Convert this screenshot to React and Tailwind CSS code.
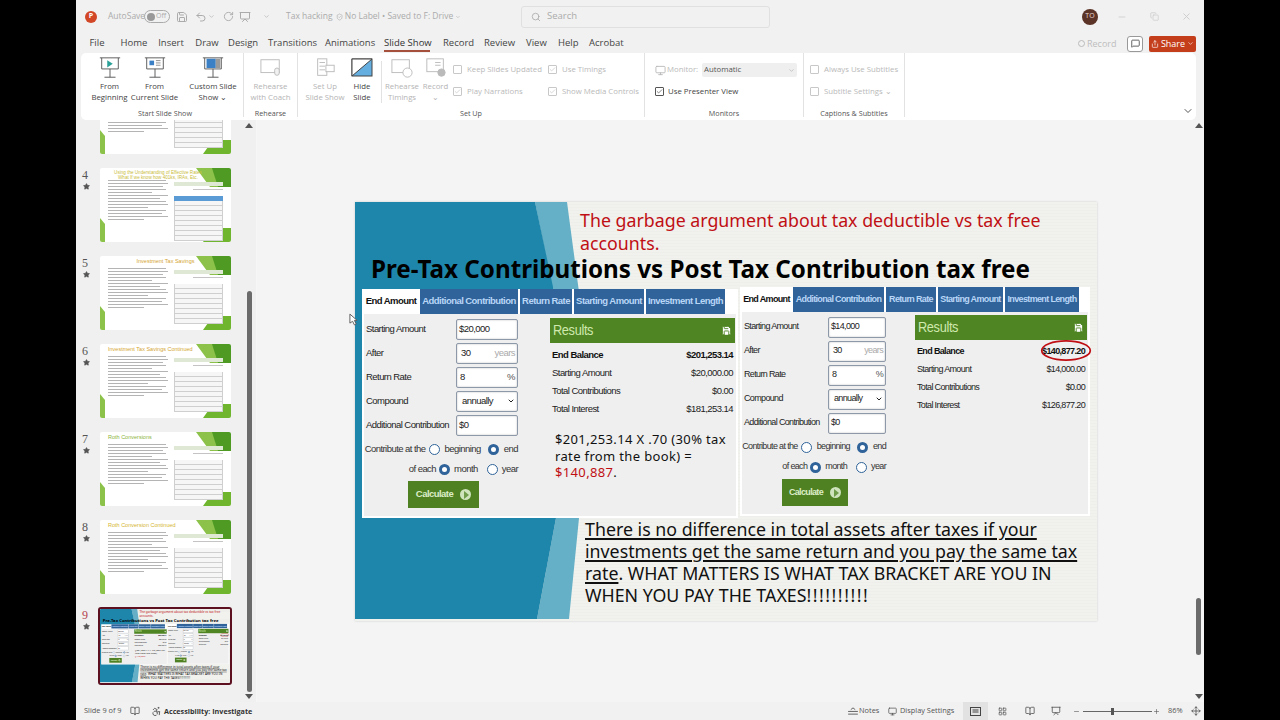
import { ChevronDown, Minus, Copy, X, Search, Save, Undo2, RotateCw, ShieldCheck, MessageSquare, Share, Star, BookOpen, Monitor, LayoutGrid, Check, Plus, Presentation, Move, Accessibility } from "lucide-react";

const tabs = [
  ["File", "w-[20px]", "ml-[11px]"],
  ["Home", "w-[28px]", "ml-[13px]"],
  ["Insert", "w-[26px]", "ml-[10px]"],
  ["Draw", "w-[24px]", "ml-[11px]"],
  ["Design", "w-[30px]", "ml-[9px]"],
  ["Transitions", "w-[44px]", "ml-[10px]"],
  ["Animations", "w-[46px]", "ml-[13px]"],
  ["Slide Show", "w-[46px]", "ml-[13px]"],
  ["Record", "w-[28px]", "ml-[13px]"],
  ["Review", "w-[28px]", "ml-[13px]"],
  ["View", "w-[19px]", "ml-[14px]"],
  ["Help", "w-[19px]", "ml-[13px]"],
  ["Acrobat", "w-[32px]", "ml-[12px]"],
];

function Screen({ children }) {
  return (
    <svg viewBox="0 0 28 26" className="w-[26px] h-[24px]" fill="none" stroke="#555" strokeWidth="1">
      <path d="M3 2h22M5 2v12h18V2M14 14v9M8 23h12" />
      {children}
    </svg>
  );
}

function RibbonButton({ lines, icon, width, faded }) {
  return (
    <div className={`flex flex-col items-center shrink-0 ${width}`}>
      <div className="h-[25px] flex items-center justify-center">{icon}</div>
      <div className={faded ? "text-[7.8px] leading-[11px] mt-[1px] text-center text-[#b4b4b4]" : "text-[7.8px] leading-[11px] mt-[1px] text-center text-[#444]"}>
        {lines.map((l) => (
          <div key={l} className="whitespace-nowrap">{l}</div>
        ))}
      </div>
    </div>
  );
}

function Group({ label, width, children }) {
  return (
    <div className={`flex flex-col shrink-0 border-r border-[#e2e2e2] mb-[3px] ${width}`}>
      <div className="flex h-[56px] pt-[2px]">{children}</div>
      <div className="text-[7.2px] leading-[8px] text-center text-[#555]">{label}</div>
    </div>
  );
}

function Faded({ label, checked, width }) {
  return (
    <div className={`flex items-center gap-[5px] text-[7.8px] leading-[10px] text-[#b9b9b9] whitespace-nowrap ${width || ""}`}>
      <span className="w-[9px] h-[9px] border border-[#c8c8c8] rounded-[1px] flex items-center justify-center">
        {checked && <Check size={7} color="#bbb" />}
      </span>
      {label}
    </div>
  );
}

function Ribbon() {
  return (
    <div className="ml-[5px] mr-[8px] h-[67px] bg-white rounded-[5px] flex pl-[6px] relative font-['Open_Sans',sans-serif]">
      <Group label="Start Slide Show" width="w-[157px]">
        <RibbonButton width="w-[45px]" lines={["From", "Beginning"]} icon={<Screen><path d="M11 4.500l6 4-6 4z" fill="#2aa198" stroke="none" /></Screen>} />
        <RibbonButton width="w-[45px]" lines={["From", "Current Slide"]} icon={<Screen><rect x="8" y="5" width="5" height="5" fill="#3b7fc4" stroke="none" /><path d="M15 5h5M15 7.500h5M15 10h5" stroke="#888" /></Screen>} />
        <div className="w-px h-[42px] bg-[#e2e2e2] ml-[6px] mt-[6px]" />
        <RibbonButton width="w-[60px]" lines={["Custom Slide", "Show ⌄"]} icon={<Screen><rect x="7" y="3" width="10" height="10" fill="#3b7fc4" stroke="none" /><rect x="17" y="3" width="5" height="10" fill="#9a9a9a" stroke="none" /></Screen>} />
      </Group>
      <Group label="Rehearse" width="w-[54px]">
        <RibbonButton faded width="w-[53px]" lines={["Rehearse", "with Coach"]} icon={<svg viewBox="0 0 26 24" className="w-[24px] h-[22px] opacity-40" fill="none" stroke="#555"><rect x="2" y="3" width="20" height="14" /><rect x="17" y="12" width="5" height="8" rx="2.500" fill="#ddd" /></svg>} />
      </Group>
      <Group label="Set Up" width="w-[347px]">
        <RibbonButton faded width="w-[54px]" lines={["Set Up", "Slide Show"]} icon={<svg viewBox="0 0 26 24" className="w-[24px] h-[22px] opacity-40" fill="none" stroke="#555"><rect x="5" y="2" width="10" height="18" /><path d="M7 6h6M7 10h6M7 14h6" /><rect x="14" y="9" width="9" height="7" fill="#fff" /></svg>} />
        <RibbonButton width="w-[20px]" lines={["Hide", "Slide"]} icon={<svg viewBox="0 0 22 20" className="w-[22px] h-[20px]"><rect x="1" y="1" width="20" height="17" fill="#64aee0" stroke="#444" /><path d="M1 18L21 1H1z" fill="#fff" stroke="#444" /></svg>} />
        <div className="w-px h-[42px] bg-[#e2e2e2] ml-[9px] mt-[6px]" />
        <RibbonButton faded width="w-[40px]" lines={["Rehearse", "Timings"]} icon={<svg viewBox="0 0 26 24" className="w-[24px] h-[22px] opacity-40" fill="none" stroke="#555"><rect x="2" y="3" width="19" height="14" /><circle cx="19" cy="17" r="5" fill="#fff" /></svg>} />
        <RibbonButton faded width="w-[27px]" lines={["Record", "⌄"]} icon={<svg viewBox="0 0 26 24" className="w-[24px] h-[22px] opacity-40" fill="none" stroke="#555"><rect x="3" y="2" width="18" height="14" /><path d="M12 6h6M12 9h6" /><circle cx="19" cy="17" r="4" fill="#555" /></svg>} />
        <div className="flex flex-col gap-[12px] pt-[9px] ml-[4px]">
          <Faded label="Keep Slides Updated" width="w-[95px]" />
          <Faded label="Play Narrations" checked width="w-[95px]" />
        </div>
        <div className="flex flex-col gap-[12px] pt-[9px]">
          <Faded label="Use Timings" checked />
          <Faded label="Show Media Controls" checked />
        </div>
      </Group>
      <Group label="Monitors" width="w-[159px]">
        <div className="flex flex-col gap-[9px] pt-[8px] pl-[10px]">
          <div className="flex items-center text-[7.8px] text-[#b9b9b9]">
            <Monitor size={11} className="mr-[1px]" />
            <span className="w-[35px]">Monitor:</span>
            <span className="w-[95px] h-[14px] bg-[#efefef] rounded-[2px] text-[#555] flex items-center justify-between px-[2px]">
              Automatic <ChevronDown size={7} color="#aaa" />
            </span>
          </div>
          <div className="flex items-center gap-[4px] text-[7.8px] text-[#444]">
            <span className="w-[9px] h-[9px] border border-[#555] rounded-[1px] flex items-center justify-center"><Check size={7} color="#333" /></span>
            Use Presenter View
          </div>
        </div>
      </Group>
      <Group label="Captions & Subtitles" width="w-[101px]">
        <div className="flex flex-col gap-[12px] pt-[9px] pl-[6px]">
          <Faded label="Always Use Subtitles" />
          <Faded label="Subtitle Settings ⌄" />
        </div>
      </Group>
      <ChevronDown size={12} color="#555" className="absolute right-[2px] bottom-[3px]" />
    </div>
  );
}

function TitleBar() {
  return (
    <div className="h-[33px] flex items-center pl-[9px] text-[8.5px] text-[#ababab] font-['Open_Sans',sans-serif]">
      <span className="w-[12px] h-[12px] rounded-full bg-[#d24726] text-white text-[7px] font-bold flex items-center justify-center">P</span>
      <span className="ml-[11px] w-[32px]">AutoSave</span>
      <span className="ml-[4px] w-[26px] h-[13px] rounded-full border border-[#aaa] flex items-center pl-[2px] gap-[1px] text-[7px]">
        <span className="w-[8px] h-[8px] rounded-full bg-[#999]" />Off
      </span>
      <Save size={12} className="ml-[6px]" />
      <Undo2 size={12} className="ml-[7px]" />
      <ChevronDown size={7} className="ml-[1px]" />
      <RotateCw size={11} className="ml-[8px]" />
      <Presentation size={12} className="ml-[5px]" />
      <ChevronDown size={7} className="ml-[12px]" />
      <div className="ml-[16px] w-[175px] shrink-0 flex items-center">
        <span className="whitespace-nowrap">Tax hacking</span>
        <ShieldCheck size={10} className="ml-[3px]" />
        <span className="ml-[2px] whitespace-nowrap">No Label • Saved to F: Drive</span>
        <ChevronDown size={8} className="ml-[2px]" />
      </div>
      <div className="ml-[60px] w-[249px] h-[22px] shrink-0 border border-[#e0e0e0] rounded-[3px] bg-[#f1f1f1] flex items-center pl-[9px] gap-[6px] text-[9.5px]">
        <Search size={10} />
        Search
      </div>
      <div className="ml-[312px] w-[16px] h-[16px] shrink-0 rounded-full bg-[#5b3327] text-[#e8d8d0] text-[7px] flex items-center justify-center">TO</div>
      <Minus size={10} className="ml-[19px] text-[#ccc]" />
      <Copy size={9} className="ml-[23px] text-[#ccc]" />
      <X size={11} className="ml-[22px] text-[#ccc]" />
    </div>
  );
}

function TabRow() {
  return (
    <div className="h-[20px] flex items-start text-[9.5px] leading-[19px] text-[#444] font-['Open_Sans',sans-serif] relative">
      {tabs.map(([name, w, ml]) => (
        <div key={name} className={`${w} ${ml} whitespace-nowrap h-[19px] text-center ${name === "Slide Show" ? "border-b-2 border-[#a5503c] text-[#333]" : ""}`}>
          {name}
        </div>
      ))}
      <div className="ml-auto flex items-center h-[19px] mr-[8px] mt-[1px]">
        <span className="flex items-center gap-[2px] text-[#bdbdbd] text-[9px] w-[49px]">
          <span className="w-[7px] h-[7px] rounded-full border border-[#bbb]" />Record
        </span>
        <span className="w-[16px] h-[16px] border border-[#999] rounded-[3px] bg-white flex items-center justify-center"><MessageSquare size={9} color="#333" /></span>
        <span className="ml-[6px] w-[47px] h-[16px] rounded-[2px] bg-[#c43e1c] text-white text-[9px] flex items-center justify-center gap-[2px]">
          <Share size={8} />Share<ChevronDown size={7} />
        </span>
      </div>
    </div>
  );
}

function Decor() {
  return (
    <svg viewBox="0 0 131 74" className="absolute inset-0 w-full h-full">
      <polygon points="103,0 131,0 131,19 112,19" fill="#4f9a23" />
      <polygon points="96,0 112,0 118,19 110,19" fill="#8cc24a" />
      <polygon points="103,74 131,74 131,60 113,60" fill="#6fb52d" />
      <polygon points="0,74 5,74 5,56 0,50" fill="#8cc24a" />
    </svg>
  );
}

function GrayLines({ widths }) {
  return (
    <div className="flex flex-col gap-[2px]">
      {widths.map((w, i) => (
        <div key={i} className={`h-px bg-[#b4b4b4] ${w}`} />
      ))}
    </div>
  );
}

const longLines = ["w-[58px]", "w-[60px]", "w-[55px]", "w-[58px]", "w-[44px]", "w-[60px]", "w-[52px]", "w-[58px]", "w-[60px]", "w-[40px]", "w-[58px]", "w-[54px]", "w-[60px]", "w-[36px]"];
const tableRows = [0, 1, 2, 3, 4, 5, 6, 7];

function Thumb({ title, titleClass, blueHead }) {
  return (
    <div className="relative w-[131px] h-[74px] bg-white rounded-[2px] overflow-hidden">
      <Decor />
      <div className="relative px-[8px] pt-[2px]">
        <div className={`h-[8px] whitespace-nowrap ${titleClass}`}>{title}</div>
        <div className="flex gap-[6px] mt-[2px]">
          <GrayLines widths={longLines} />
          <div className="flex flex-col w-[53px] mt-[2px]">
            <div className="h-[4px] bg-[#dfe8d4] mb-[3px]" />
            <div className="h-px w-[30px] bg-[#c4c4c4] self-end mb-[6px]" />
            {blueHead && <div className="h-[5px] bg-[#5b9bd5]" />}
            {tableRows.map((r) => (
              <div key={r} className="h-[5px] border-b border-x border-[#cfcfcf] bg-[#f6f6f6]" />
            ))}
          </div>
        </div>
      </div>
    </div>
  );
}

function ThumbRow({ n, active, children }) {
  return (
    <div className="flex shrink-0 h-[74px]">
      <div className="w-[24px] pl-[6px] flex flex-col">
        <span className={active ? "text-[12px] leading-[14px] text-[#b4434f] font-['Liberation_Serif',serif]" : "text-[12px] leading-[14px] text-[#555] font-['Liberation_Serif',serif]"}>{n}</span>
        <Star size={7} fill="#555" color="#555" className="ml-[1px] mt-[1px]" />
      </div>
      {children}
    </div>
  );
}

const tabsA = [
  ["Additional Contribution", "w-[98px]"],
  ["Return Rate", "w-[52px]"],
  ["Starting Amount", "w-[70px]"],
  ["Investment Length", "w-[79px]"],
];
const tabsB = [
  ["Additional Contribution", "w-[91px]"],
  ["Return Rate", "w-[50px]"],
  ["Starting Amount", "w-[65px]"],
  ["Investment Length", "w-[74px]"],
];

function Row({ label, labelW, inputW, children }) {
  return (
    <div className="flex items-center h-[24px]">
      <span className={`shrink-0 whitespace-nowrap ${labelW}`}>{label}</span>
      <div className={`h-[21px] shrink-0 bg-white border border-[#8d99a8] rounded-[2px] flex items-center justify-between px-[2px] shadow-[inset_0_0_2px_#bbb] ${inputW}`}>
        {children}
      </div>
    </div>
  );
}

function Radio({ on }) {
  return on ? (
    <span className="inline-block shrink-0 w-[11px] h-[11px] rounded-full border-[3px] border-[#2f6399] bg-white" />
  ) : (
    <span className="inline-block shrink-0 w-[11px] h-[11px] rounded-full border border-[#2f6399] bg-white" />
  );
}

function Calculator({ tabList, endTabW, labelW, inputW, formW, resultsW, resultsMt, gap, btnMl, btnW, width, fontClass, start, balance, interest, startFmt, children, className }) {
  return (
    <div className={`shrink-0 bg-white px-[2px] pb-[2px] h-[229px] flex flex-col text-[#222] font-['Liberation_Sans',sans-serif] ${fontClass} ${width} ${className || ""}`}>
      <div className="flex gap-[2px] h-[25px] shrink-0">
        <div className={`flex items-center justify-center font-bold text-[#111] whitespace-nowrap shrink-0 ${endTabW}`}>End Amount</div>
        {tabList.map(([t, w]) => (
          <div key={t} className={`flex items-center justify-center font-bold text-[#b9d6f7] bg-[#2f6399] whitespace-nowrap shrink-0 ${w}`}>{t}</div>
        ))}
      </div>
      <div className={`flex flex-1 bg-[#efefef] pl-[2px] pt-[3px] ${gap}`}>
        <div className={`flex flex-col shrink-0 ${formW}`}>
          <Row label="Starting Amount" labelW={labelW} inputW={inputW}>{start}</Row>
          <Row label="After" labelW={labelW} inputW={inputW}><span className="pl-[2px]">30</span><span className="text-[#aaa]">years</span></Row>
          <Row label="Return Rate" labelW={labelW} inputW={inputW}><span className="pl-[1px]">8</span><span className="text-[#555]">%</span></Row>
          <Row label="Compound" labelW={labelW} inputW={inputW}><span className="pl-[3px]">annually</span><ChevronDown size={8} color="#222" strokeWidth={3} /></Row>
          <Row label="Additional Contribution" labelW={labelW} inputW={inputW}>$0</Row>
          <div className="flex items-center justify-end gap-[3px] h-[20px] mt-[2px] text-[#333] whitespace-nowrap">
            Contribute at the <Radio /> <span className="ml-[2px] mr-[4px]">beginning</span> <Radio on /> <span className="ml-[2px]">end</span>
          </div>
          <div className="flex items-center justify-end gap-[3px] h-[20px] text-[#333] whitespace-nowrap">
            of each <Radio on /> <span className="ml-[1px] mr-[6px]">month</span> <Radio /> <span className="ml-[1px]">year</span>
          </div>
          <div className={`mt-[2px] h-[27px] bg-[#4f8122] flex items-center justify-center gap-[7px] font-bold text-[#dcedc8] ${btnW} ${btnMl}`}>
            Calculate
            <span className="w-[11px] h-[11px] rounded-full bg-[#cfe3bd] flex items-center justify-center">
              <span className="border-l-[5px] border-l-[#6f9c49] border-y-[4px] border-y-transparent ml-[2px]" />
            </span>
          </div>
        </div>
        <div className={`flex flex-col shrink-0 ${resultsMt} ${resultsW}`}>
          <div className="h-[25px] bg-[#4f8523] flex items-center justify-between px-[3px] text-[15px] tracking-[-0.4px] text-[#cfe9ae]">
            <span className="inline-block origin-left scale-x-[0.85]">Results</span>
            <Save size={11} fill="#fff" color="#4f8523" />
          </div>
          <div className="flex flex-col px-[2px] mt-[3px]">
            <div className="flex justify-between items-center h-[18px] font-bold text-[#111]"><span>End Balance</span><span>{balance}</span></div>
            <div className="flex justify-between items-center h-[18px]"><span>Starting Amount</span><span>{startFmt}</span></div>
            <div className="flex justify-between items-center h-[18px]"><span>Total Contributions</span><span>$0.00</span></div>
            <div className="flex justify-between items-center h-[18px]"><span>Total Interest</span><span>{interest}</span></div>
          </div>
          {children}
        </div>
      </div>
    </div>
  );
}

function SlideContent() {
  return (
    <div className="relative w-[742px] h-[419px] overflow-hidden bg-[repeating-linear-gradient(0deg,#f1f2ee_0,#f1f2ee_2px,#eeefeb_2px,#eeefeb_3px)] font-['Noto_Sans',sans-serif]">
      <svg viewBox="0 0 742 419" className="absolute inset-0 w-full h-full">
        <polygon points="180,0 212,0 224,90 224,316 214,417 182,417 201,316 198,90" fill="#65b0c6" />
        <polygon points="0,0 180,0 198,85 201,316 182,417 0,417" fill="#1f86ab" />
      </svg>
      <div className="relative pt-[7px] flex flex-col">
        <div className="pl-[225px] h-[44px] text-[17.800px] leading-[23px] text-[#c00f14]">
          The garbage argument about tax deductible vs tax free accounts.
        </div>
        <div className="pl-[16px] h-[34px] text-[24.200px] leading-[31px] font-bold text-black whitespace-nowrap">
          Pre-Tax Contributions vs Post Tax Contribution tax free
        </div>
        <div className="flex items-start pl-[7px] gap-[2px] h-[232px]">
          <Calculator
            className="mt-[2px]" width="w-[376px]" fontClass="text-[9.5px] tracking-[-0.55px]" tabList={tabsA} endTabW="w-[54px]" labelW="w-[90px]" inputW="w-[62px]" formW="w-[152px]" resultsW="w-[185px]" resultsMt="mt-[1px]" gap="gap-[32px]"
            btnMl="ml-[42px]" btnW="w-[71px]" start="$20,000" startFmt="$20,000.00" balance="$201,253.14" interest="$181,253.14"
          >
            <div className="mt-[13px] pl-[5px] text-[13px] leading-[16.5px] text-[#111] tracking-[0.35px] font-['Noto_Sans',sans-serif] w-[180px]">
              $201,253.14 X .70 (30% tax rate from the book) = <span className="text-[#c00f14]">$140,887</span>.
            </div>
          </Calculator>
          <Calculator
            width="w-[350px]" fontClass="text-[9px] tracking-[-0.65px]" tabList={tabsB} endTabW="w-[49px]" labelW="w-[84px]" inputW="w-[58px]" formW="w-[142px]" resultsW="w-[172px]" resultsMt="mt-0" gap="gap-[29px]"
            btnMl="ml-[38px]" btnW="w-[66px]" start="$14,000" startFmt="$14,000.00" balance="$140,877.20" interest="$126,877.20"
          />
        </div>
        <div className="pl-[230px] -mt-[1px] text-[17.800px] leading-[22px] text-[#111] whitespace-nowrap">
          <div className="underline decoration-[1.5px] underline-offset-2">There is no difference in total assets after taxes if your</div>
          <div className="underline decoration-[1.5px] underline-offset-2">investments get the same return and you pay the same tax</div>
          <div><span className="underline decoration-[1.5px] underline-offset-2">rate</span>. WHAT MATTERS IS WHAT TAX BRACKET ARE YOU IN</div>
          <div>WHEN YOU PAY THE TAXES<span className="tracking-[1.5px]">!!!!!!!!!!</span></div>
        </div>
      </div>
      <svg viewBox="0 0 60 26" className="absolute left-[685px] top-[137px] w-[52px] h-[23px]" fill="none">
        <ellipse cx="30" cy="13" rx="28" ry="11" stroke="#c00f14" strokeWidth="2" />
      </svg>
    </div>
  );
}

function Sidebar() {
  return (
    <div className="w-[181px] shrink-0 flex border-r border-[#f6f6f6] bg-[#f0f0f0] font-['Liberation_Sans',sans-serif]">
      <div className="w-[166px] h-[582px] overflow-hidden flex flex-col gap-[14px]">
        <div className="-mt-[40px] flex shrink-0 h-[74px]">
          <div className="w-[24px]" />
          <Thumb title="" titleClass="" />
        </div>
        <ThumbRow n="4">
          <Thumb blueHead title={<>Using the Understanding of Effective Rates<br />What If we know how 401ks, IRAs, Etc.</>} titleClass="text-[#c9bb3a] text-center w-[100px] text-[4.600px] leading-[5px]" />
        </ThumbRow>
        <ThumbRow n="5"><Thumb title="Investment Tax Savings" titleClass="text-[#d5a531] text-center text-[5.500px] leading-[6px]" /></ThumbRow>
        <ThumbRow n="6"><Thumb title="Investment Tax Savings Continued" titleClass="text-[#d5a531] text-[5.500px] leading-[6px]" /></ThumbRow>
        <ThumbRow n="7"><Thumb title="Roth Conversions" titleClass="text-[#8cb43c] text-[5.500px] leading-[6px]" /></ThumbRow>
        <ThumbRow n="8"><Thumb title="Roth Conversion Continued" titleClass="text-[#d5b531] text-[5.500px] leading-[6px]" /></ThumbRow>
        <ThumbRow n="9" active>
          <div className="-ml-[2px] -mt-[1px] w-[134px] h-[78px] shrink-0 border-2 border-[#5c1020] rounded-[3px] overflow-hidden relative">
            <div className="absolute left-0 top-0 origin-top-left scale-[0.1755]">
              <SlideContent />
            </div>
          </div>
        </ThumbRow>
      </div>
      <div className="w-[14px] relative">
        <span className="absolute left-[3px] top-[3px] border-x-[4px] border-x-transparent border-b-[5px] border-b-[#555]" />
        <span className="absolute left-[5px] top-[171px] w-[5px] h-[401px] rounded-full bg-[#6b6b6b]" />
        <span className="absolute left-[3px] bottom-[3px] border-x-[4px] border-x-transparent border-t-[5px] border-t-[#555]" />
      </div>
    </div>
  );
}

function StatusBar() {
  return (
    <div className="h-[18px] flex items-center pl-[8px] text-[7.4px] text-[#555] font-['Open_Sans',sans-serif] relative">
      <span className="w-[46px] whitespace-nowrap">Slide 9 of 9</span>
      <BookOpen size={10} />
      <Accessibility size={11} className="ml-[11px]" />
      <span className="ml-[2px] font-bold text-[7.200px] text-[#333] whitespace-nowrap">Accessibility: Investigate</span>
      <div className="ml-auto flex items-center h-[18px]">
        <svg viewBox="0 0 11 9" className="w-[10px] h-[8px] mr-[1px]" fill="none" stroke="#555"><path d="M3 3l2.500-2L8 3M0 5h11M0 8h11" /></svg>
        <span className="w-[20px]">Notes</span>
        <Monitor size={9} className="ml-[9px] mr-[3px]" />
        <span className="w-[50px] whitespace-nowrap">Display Settings</span>
        <span className="ml-[13px] w-[25px] h-[18px] bg-[#e2e2e2] flex items-center justify-center">
          <svg viewBox="0 0 11 9" className="w-[11px] h-[9px]" fill="none" stroke="#444"><rect x="0.500" y="0.500" width="10" height="8" /><path d="M2.500 3h6M2.500 5h6" /></svg>
        </span>
        <LayoutGrid size={9} className="ml-[10px]" />
        <BookOpen size={10} className="ml-[18px]" />
        <Presentation size={10} className="ml-[16px]" />
        <Minus size={7} className="ml-[12px]" />
        <span className="ml-[3px] w-[69px] h-px bg-[#666] relative">
          <span className="absolute left-[28px] -top-[3px] w-[3px] h-[7px] bg-[#555]" />
        </span>
        <Plus size={7} className="ml-[1px]" />
        <span className="ml-[8px] w-[22px]">86%</span>
        <Move size={10} className="ml-[1px] mr-[3px]" />
      </div>
    </div>
  );
}

export default function App() {
  return (
    <div className="w-[1280px] h-[720px] bg-black flex justify-center overflow-hidden">
      <div className="w-[1128px] h-[720px] bg-[#f1f1f1] flex flex-col relative">
        <TitleBar />
        <TabRow />
        <Ribbon />
        <div className="flex h-[582px] overflow-hidden">
          <Sidebar />
          <div className="flex-1 bg-[#f4f4f4] flex relative">
            <div className="flex-1 pt-[82px] pl-[98px]">
              <div className="w-[742px] h-[419px] shadow-[0_0_2px_#ccc]">
                <SlideContent />
              </div>
            </div>
            <div className="w-[13px] relative">
              <span className="absolute left-[4px] top-[3px] border-x-[4px] border-x-transparent border-b-[5px] border-b-[#555]" />
              <span className="absolute left-[5px] top-[478px] w-[5px] h-[57px] rounded-full bg-[#6b6b6b]" />
              <span className="absolute left-[4px] bottom-[3px] border-x-[4px] border-x-transparent border-t-[5px] border-t-[#555]" />
            </div>
          </div>
        </div>
        <StatusBar />
        <svg viewBox="0 0 10 14" className="absolute left-[273px] top-[313px] w-[9px] h-[13px]" fill="#fff" stroke="#555" strokeWidth="1">
          <path d="M1 1v10l3-2 2 4 2-1-2-4h3z" />
        </svg>
      </div>
    </div>
  );
}
